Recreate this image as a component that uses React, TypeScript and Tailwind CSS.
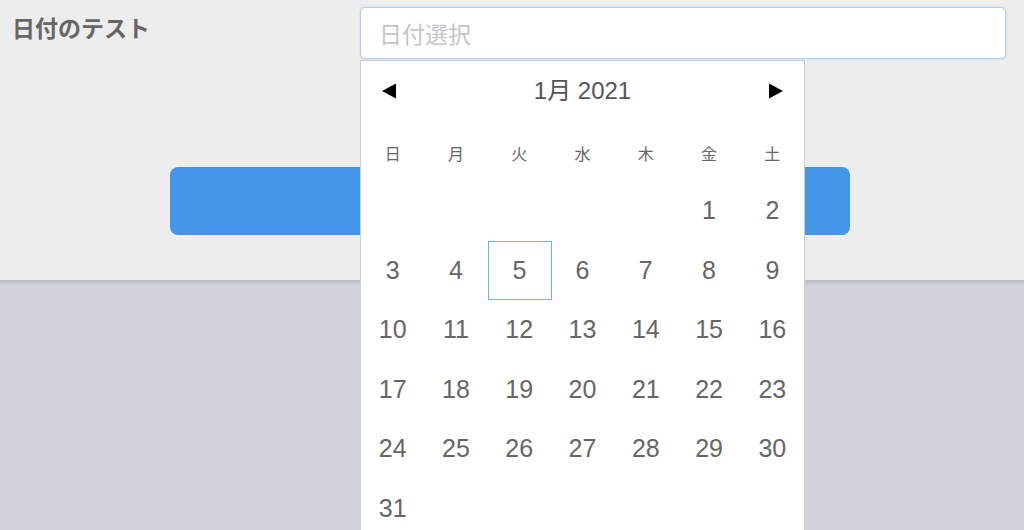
const WEEKDAYS = ["日", "月", "火", "水", "木", "金", "土"];

// January 2021 starts on Friday
const DAYS: (number | null)[] = [
  null, null, null, null, null,
  ...Array.from({ length: 31 }, (_, i) => i + 1),
];

const SELECTED = 5;

export default function App() {
  return (
    <div className="h-[530px] w-full overflow-hidden bg-[#d0d3db] font-['Liberation_Sans','Noto_Sans_CJK_JP',sans-serif]">
      {/* Form area */}
      <div className="relative h-[280px] bg-[#ededed] pt-[7px]">
        <div className="flex">
          <div className="w-[360px] shrink-0 pl-[12px] pt-[5px] text-[23px] font-bold leading-[30px] text-[#666] font-['Noto_Sans_CJK_JP',sans-serif]">
            日付のテスト
          </div>
          <div className="mr-[18px] flex h-[52px] flex-1 items-center rounded-[5px] border border-[#a9d3f7] bg-white px-[18px] shadow-[0_0_2px_rgba(120,180,240,0.5)]">
            <span className="text-[23px] text-[#c3c6ca] font-['Noto_Sans_CJK_JP',sans-serif]">日付選択</span>
          </div>
        </div>

        <div className="ml-[170px] mt-[108px] h-[68px] w-[680px] rounded-[8px] bg-[#4496ea]" />

        {/* Datepicker popup */}
        <div className="absolute left-[360px] top-[60px] z-10 h-[480px] w-[445px] border border-[#cfcfcf] bg-white">
          <div className="flex h-[59px] items-center justify-between px-[20px]">
            <svg width="16" height="18" viewBox="0 0 16 18">
              <path d="M1 9 L15 1.5 L15 16.5 Z" fill="#000" />
            </svg>
            <span className="text-[24px] text-[#555]">1月 2021</span>
            <svg width="16" height="18" viewBox="0 0 16 18">
              <path d="M15 9 L1 1.5 L1 16.5 Z" fill="#000" />
            </svg>
          </div>

          <div className="grid h-[61px] grid-cols-7 items-center pt-[4px]">
            {WEEKDAYS.map((w) => (
              <div key={w} className="text-center text-[16px] text-[#666] font-['Noto_Sans_CJK_JP',sans-serif]">
                {w}
              </div>
            ))}
          </div>

          <div className="grid grid-cols-7">
            {DAYS.map((d, i) => (
              <div
                key={i}
                className={
                  d === SELECTED
                    ? "mx-auto flex h-[59.5px] w-[64px] items-center justify-center border border-[#5cbce3] text-[25px] text-[#666]"
                    : "flex h-[59.5px] items-center justify-center text-[25px] text-[#666]"
                }
              >
                {d ?? ""}
              </div>
            ))}
          </div>
        </div>
      </div>
      <div className="h-[6px] bg-gradient-to-b from-[#b9bcc4] to-[#d0d3db]" />
    </div>
  );
}
